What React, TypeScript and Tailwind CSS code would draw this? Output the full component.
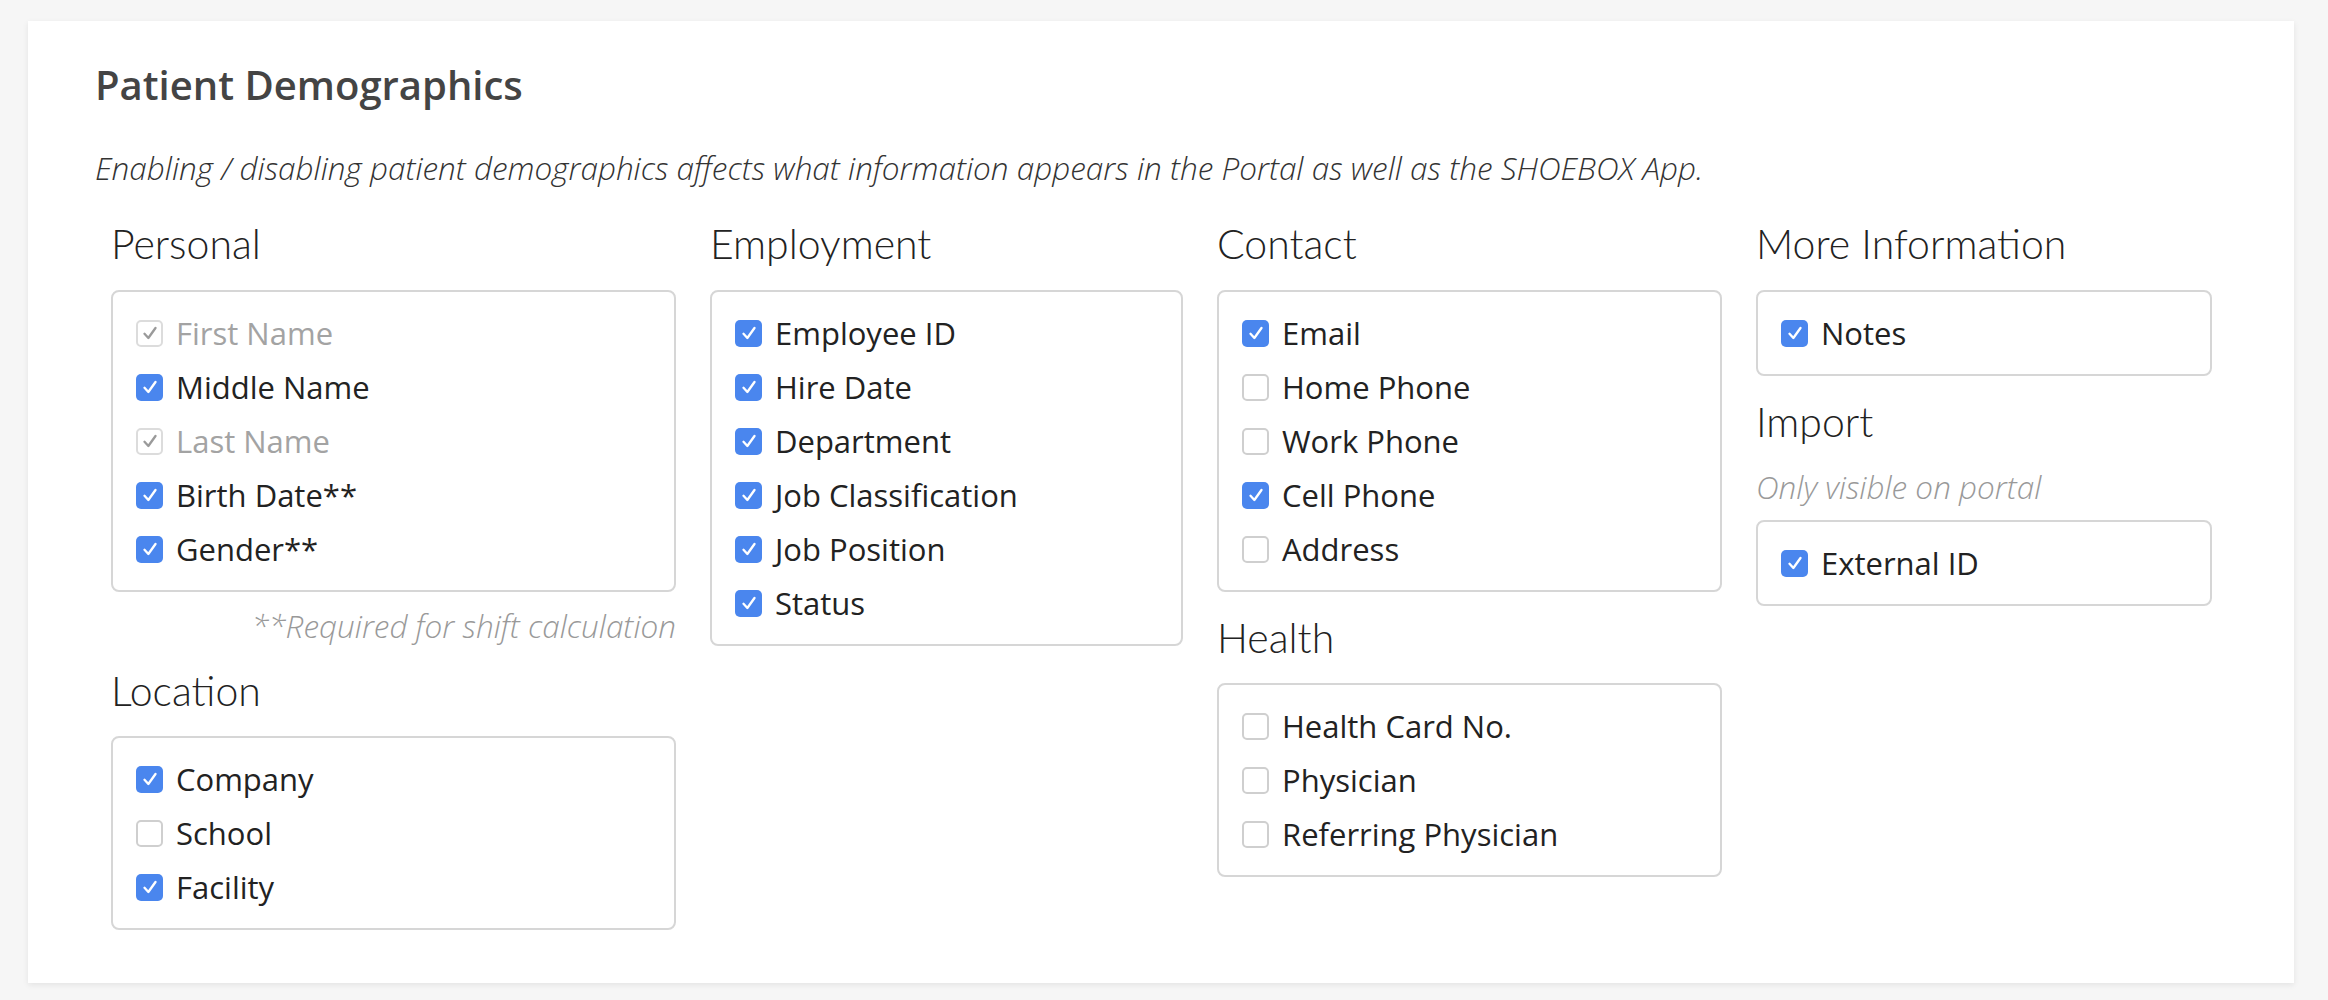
import React from 'react';

type Item = { label: string; checked: boolean; disabled?: boolean };

const CheckIcon: React.FC<{ className?: string }> = ({ className }) => (
  <svg viewBox="0 0 16 16" className={className} fill="none">
    <path d="M4 8.6 L6.8 11.6 L12 4.4" stroke="currentColor" strokeWidth="1.7" strokeLinecap="round" strokeLinejoin="round" />
  </svg>
);

const Checkbox: React.FC<{ checked: boolean; disabled?: boolean }> = ({ checked, disabled }) => {
  if (disabled) {
    return (
      <span className="flex h-[27px] w-[27px] shrink-0 items-center justify-center rounded-[5px] border-2 border-[#dcdcdc] bg-white">
        <CheckIcon className="h-[22px] w-[22px] text-[#9a9a9a]" />
      </span>
    );
  }
  if (checked) {
    return (
      <span className="flex h-[27px] w-[27px] shrink-0 items-center justify-center rounded-[5px] bg-[#4a86ee]">
        <CheckIcon className="h-[22px] w-[22px] text-white" />
      </span>
    );
  }
  return <span className="h-[27px] w-[27px] shrink-0 rounded-[5px] border-2 border-[#cfcfcf] bg-white" />;
};

const Heading: React.FC<{ children: React.ReactNode; className?: string }> = ({ children, className = '' }) => (
  <h3 className={`font-['Lato',sans-serif] text-[41px] font-light leading-[48px] text-[#222] ${className}`}>{children}</h3>
);

const Group: React.FC<{ items: Item[] }> = ({ items }) => (
  <div className="rounded-[8px] border-2 border-[#d6d6d6] pl-[23px] pt-[14px] pb-[14px]">
    {items.map((item) => (
      <label key={item.label} className="flex h-[54px] items-center gap-[13px]">
        <Checkbox checked={item.checked} disabled={item.disabled} />
        <span className={`text-[31px] ${item.disabled ? 'text-[#a3a3a3]' : 'text-[#222]'}`}>{item.label}</span>
      </label>
    ))}
  </div>
);

const personal: Item[] = [
  { label: 'First Name', checked: true, disabled: true },
  { label: 'Middle Name', checked: true },
  { label: 'Last Name', checked: true, disabled: true },
  { label: 'Birth Date**', checked: true },
  { label: 'Gender**', checked: true },
];
const location: Item[] = [
  { label: 'Company', checked: true },
  { label: 'School', checked: false },
  { label: 'Facility', checked: true },
];
const employment: Item[] = [
  { label: 'Employee ID', checked: true },
  { label: 'Hire Date', checked: true },
  { label: 'Department', checked: true },
  { label: 'Job Classification', checked: true },
  { label: 'Job Position', checked: true },
  { label: 'Status', checked: true },
];
const contact: Item[] = [
  { label: 'Email', checked: true },
  { label: 'Home Phone', checked: false },
  { label: 'Work Phone', checked: false },
  { label: 'Cell Phone', checked: true },
  { label: 'Address', checked: false },
];
const health: Item[] = [
  { label: 'Health Card No.', checked: false },
  { label: 'Physician', checked: false },
  { label: 'Referring Physician', checked: false },
];

export default function App() {
  return (
    <div className="min-h-[1000px] bg-[#f6f6f6] pt-[21px] pl-[28px] font-['Open_Sans',sans-serif]">
      <div className="h-[962px] w-[2266px] bg-white pl-[67px] pt-[39px] shadow-[0_2px_6px_rgba(0,0,0,0.08)]">
        {/* Title */}
        <h2 className="text-[40px] font-semibold leading-[50px] text-[#444]">Patient Demographics</h2>
        <p className="mt-[36px] text-[31.5px] font-light italic leading-[44px] text-[#333]">
          Enabling / disabling patient demographics affects what information appears in the Portal as well as the SHOEBOX App.
        </p>

        {/* Columns */}
        <div className="mt-[30px] ml-[16px] flex items-start gap-[34px]">
          <div className="w-[565px]">
            <Heading className="mb-[22px]">Personal</Heading>
            <Group items={personal} />
            <p className="mt-[12px] text-right text-[31.5px] font-light italic leading-[44px] text-[#999]">
              **Required for shift calculation
            </p>
            <Heading className="mt-[19px] mb-[21px]">Location</Heading>
            <Group items={location} />
          </div>

          <div className="w-[473px]">
            <Heading className="mb-[22px]">Employment</Heading>
            <Group items={employment} />
          </div>

          <div className="w-[505px]">
            <Heading className="mb-[22px]">Contact</Heading>
            <Group items={contact} />
            <Heading className="mt-[22px] mb-[21px]">Health</Heading>
            <Group items={health} />
          </div>

          <div className="w-[456px]">
            <Heading className="mb-[22px]">More Information</Heading>
            <Group items={[{ label: 'Notes', checked: true }]} />
            <Heading className="mt-[22px]">Import</Heading>
            <p className="mt-[19px] mb-[11px] text-[31.5px] font-light italic leading-[44px] text-[#999]">Only visible on portal</p>
            <Group items={[{ label: 'External ID', checked: true }]} />
          </div>
        </div>
      </div>
    </div>
  );
}
